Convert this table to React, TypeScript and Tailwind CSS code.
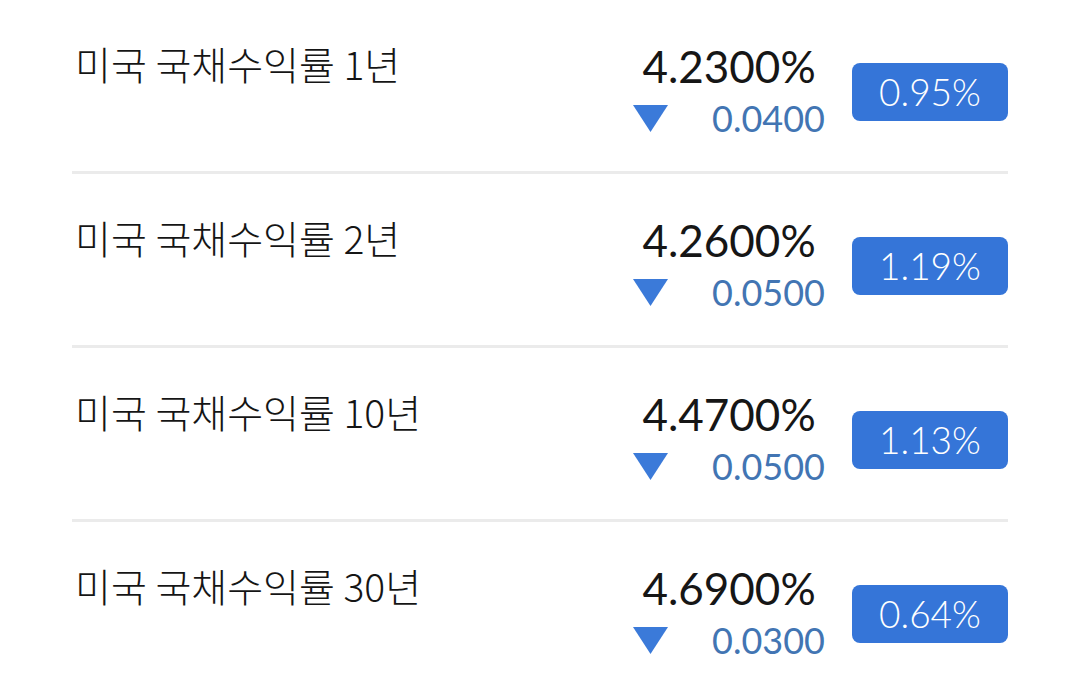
const rows = [
  { title: "미국 국채수익률 1년", value: "4.2300%", change: "0.0400", pct: "0.95%" },
  { title: "미국 국채수익률 2년", value: "4.2600%", change: "0.0500", pct: "1.19%" },
  { title: "미국 국채수익률 10년", value: "4.4700%", change: "0.0500", pct: "1.13%" },
  { title: "미국 국채수익률 30년", value: "4.6900%", change: "0.0300", pct: "0.64%" },
];

function DownTriangle() {
  return (
    <svg width="35" height="27" viewBox="0 0 35 27" className="shrink-0">
      <polygon points="0,0 35,0 17.5,27" fill="#3b7ad9" />
    </svg>
  );
}

export default function App() {
  return (
    <div className="min-h-screen w-full bg-white">
      <div className="ml-[72px] w-[936px]">
        {rows.map((row) => (
          <div
            key={row.title}
            className="flex items-start justify-between border-b-[3px] border-[#ebebeb] pt-10 pb-[27px]"
          >
            <span
              className="pl-[3px] text-[39px] leading-[46px] font-light text-[#151515]"
              style={{ fontFamily: '"Noto Sans CJK KR", "Noto Sans", sans-serif' }}
            >
              {row.title}
            </span>
            <div
              className="flex items-center gap-[27px]"
              style={{ fontFamily: "Lato, 'Noto Sans', sans-serif" }}
            >
              <div className="flex flex-col items-center">
                <span className="text-[44px] leading-[52px] text-[#161616]">{row.value}</span>
                <div className="flex items-center gap-[44px]">
                  <DownTriangle />
                  <span className="text-[36px] leading-[52px] text-[#4275b3]">{row.change}</span>
                </div>
              </div>
              <div className="flex h-[58px] w-[156px] items-center justify-center rounded-lg bg-[#3575d8] text-[37px] font-light text-white">
                {row.pct}
              </div>
            </div>
          </div>
        ))}
      </div>
    </div>
  );
}
